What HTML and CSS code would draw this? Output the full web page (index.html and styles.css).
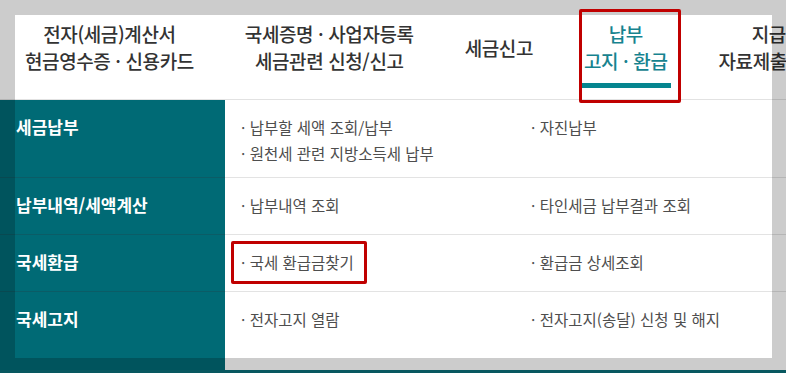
FILE: index.html
```html
<!DOCTYPE html>
<html lang="ko">
<head>
<meta charset="utf-8">
<title>납부 · 고지 · 환급</title>
<link rel="stylesheet" href="styles.css">
</head>
<body>
<div class="page">
  <nav class="gnb">
    <a class="tab"><span class="tab-text">전자(세금)계산서<br>현금영수증 · 신용카드</span></a>
    <a class="tab"><span class="tab-text">국세증명 · 사업자등록<br>세금관련 신청/신고</span></a>
    <a class="tab"><span class="tab-text">세금신고</span></a>
    <a class="tab active"><span class="tab-text">납부<br>고지 · 환급</span></a>
    <a class="tab"><span class="tab-text">지급명세서<br>자료제출 · 공익법인</span></a>
  </nav>
  <div class="mega">
    <div class="row">
      <div class="label">세금납부</div>
      <ul class="items">
        <li>· 납부할 세액 조회/납부</li>
        <li>· 자진납부</li>
        <li>· 원천세 관련 지방소득세 납부</li>
      </ul>
    </div>
    <div class="row">
      <div class="label">납부내역/세액계산</div>
      <ul class="items">
        <li>· 납부내역 조회</li>
        <li>· 타인세금 납부결과 조회</li>
      </ul>
    </div>
    <div class="row">
      <div class="label">국세환급</div>
      <ul class="items">
        <li>· 국세 환급금찾기</li>
        <li>· 환급금 상세조회</li>
      </ul>
    </div>
    <div class="row last">
      <div class="label">국세고지</div>
      <ul class="items">
        <li>· 전자고지 열람</li>
        <li>· 전자고지(송달) 신청 및 해지</li>
      </ul>
    </div>
  </div>
  <div class="footer-line"></div>
</div>
<div class="spotlight"></div>
<div class="mark mark-tab"></div>
<div class="mark mark-item"></div>
</body>
</html>
```
FILE: styles.css
```css
html, body {
  margin: 0;
  padding: 0;
}
body {
  width: 786px;
  height: 373px;
  overflow: hidden;
  position: relative;
  background: #ffffff;
  font-family: "Noto Sans CJK KR", "Noto Sans", sans-serif;
}
.page {
  width: 786px;
}
.gnb {
  display: flex;
  align-items: flex-start;
  gap: 43px;
  height: 100px;
  box-sizing: border-box;
  padding-left: 21px;
  border-bottom: 1px solid #e2e2e2;
  background: #fff;
  white-space: nowrap;
  overflow: hidden;
}
.tab {
  flex: none;
  box-sizing: border-box;
  height: 88px;
  padding: 21px 4px 0;
  border-bottom: 5px solid transparent;
  color: #333333;
  font-size: 19px;
  font-weight: 500;
  letter-spacing: -0.4px;
  text-decoration: none;
}
.tab-text {
  display: flex;
  align-items: center;
  justify-content: center;
  height: 52px;
  line-height: 27px;
  text-align: center;
}
.tab.active {
  color: #17838f;
  border-bottom-color: #05858f;
}
.mega {
  height: 270px;
  background: linear-gradient(to right, #006a75 225px, #ffffff 225px);
}
.row {
  display: grid;
  grid-template-columns: 225px 1fr;
  min-height: 57px;
}
.label {
  box-sizing: border-box;
  padding: 14px 0 0 16px;
  color: #ffffff;
  font-size: 17px;
  font-weight: 700;
  line-height: 26px;
  border-bottom: 1px solid #0b5c66;
}
.items {
  box-sizing: border-box;
  margin: 0;
  padding: 14px 0 11px 16px;
  list-style: none;
  display: grid;
  grid-template-columns: 290px 290px;
  align-content: start;
  color: #4e4e4e;
  font-size: 15.5px;
  line-height: 26px;
  border-bottom: 1px solid #e3e3e3;
}
.row.last .label,
.row.last .items {
  border-bottom: none;
}
.footer-line {
  height: 3px;
  background: #0a6e78;
}
.spotlight {
  position: absolute;
  left: 15px;
  top: 15px;
  width: 757px;
  height: 343px;
  box-shadow: 0 0 0 2000px rgba(0, 0, 0, 0.2);
  pointer-events: none;
}
.mark {
  position: absolute;
  box-sizing: border-box;
  border: 3px solid #c00000;
  border-radius: 2px;
  pointer-events: none;
}
.mark-tab {
  left: 579px;
  top: 9px;
  width: 102px;
  height: 94px;
}
.mark-item {
  left: 231px;
  top: 241px;
  width: 136px;
  height: 43px;
}
```
